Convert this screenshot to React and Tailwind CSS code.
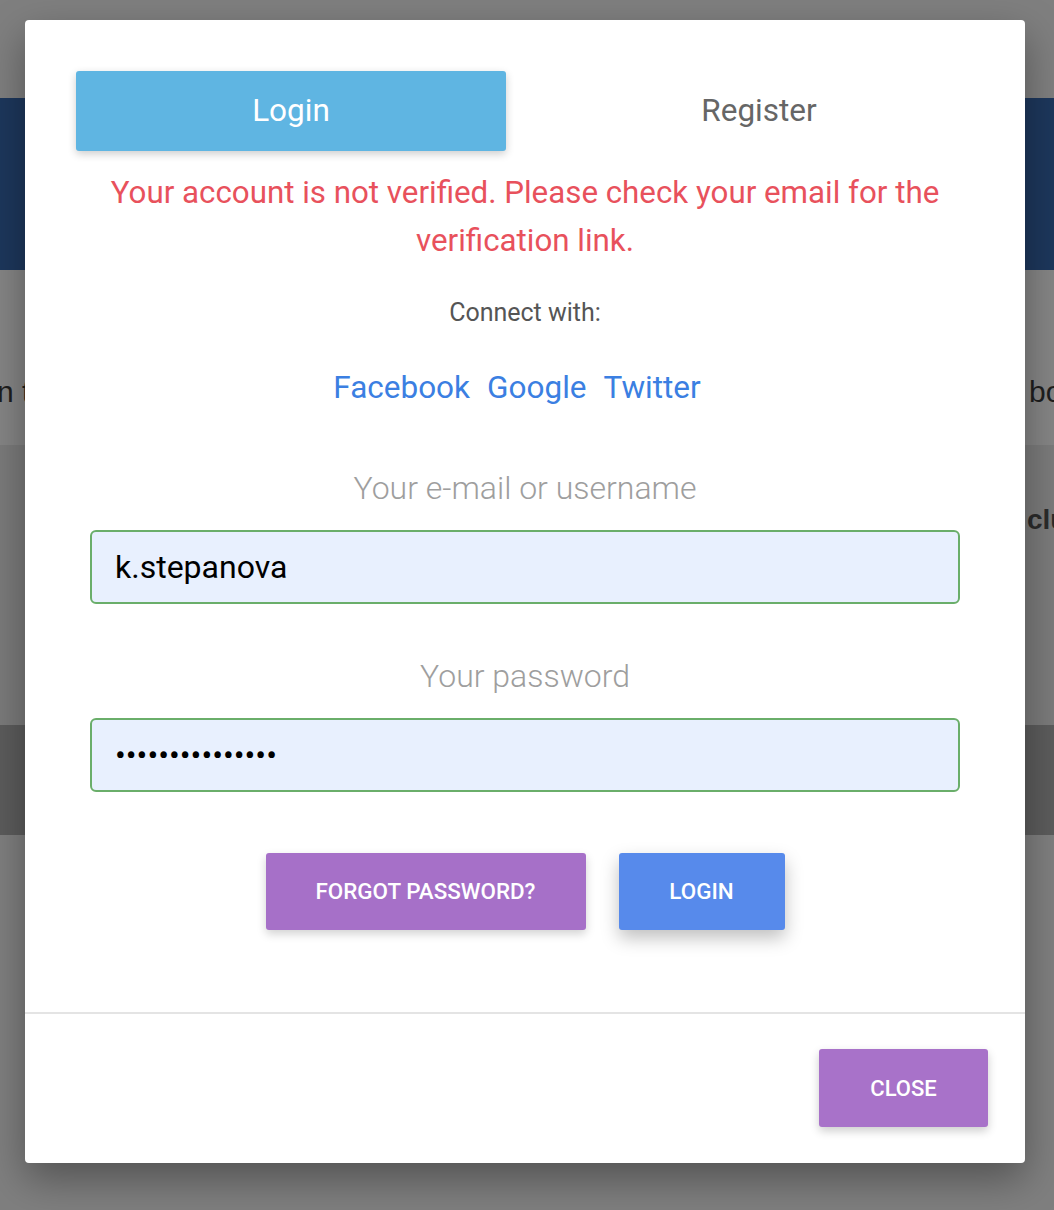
import React, { useState } from 'react'

/**
 * Login modal shown over a dimmed landing page.
 */
function Backdrop() {
    return (
        <div className="w-full min-h-[1210px] bg-[#7f7f7f] font-['Liberation_Sans',sans-serif]">
            <div className="h-[98px] bg-[#7f7f7f]" />
            <div className="h-[172px] bg-[#1d375c]" />
            <div className="h-[175px] bg-[#858585] flex items-start pt-[104px] overflow-hidden whitespace-nowrap text-[30px] leading-[36px] text-[#1e1e1e]">
                <span className="-ml-[3px]">n t</span>
                <span className="ml-auto w-[27px] overflow-hidden pl-[2px]">book</span>
            </div>
            <div className="h-[280px] bg-[#7b7b7b] flex pt-[54px] overflow-hidden whitespace-nowrap">
                <span className="ml-auto w-[27px] overflow-hidden text-[28px] font-bold text-[#2b2b2b]">club</span>
            </div>
            <div className="h-[110px] bg-[#5c5c5c]" />
        </div>
    )
}

function LoginModal() {
    const [tab, setTab] = useState('login')
    const [user, setUser] = useState('k.stepanova')
    const [pass, setPass] = useState('•••••••••••••••')

    return (
        <div className="absolute left-[25px] top-[20px] w-[1000px] bg-white rounded-[4px] shadow-[0_16px_40px_rgba(0,0,0,0.35)] font-['Roboto',sans-serif]">
            <div className="pt-[51px] pb-[82px] flex flex-col items-center">
                <div className="flex gap-[38px] w-[898px]">
                    <button
                        onClick={() => setTab('login')}
                        className="flex-1 h-[80px] rounded-[3px] bg-[#5fb5e2] text-white text-[31.5px] shadow-[0_3px_8px_rgba(0,0,0,0.2)]"
                    >
                        Login
                    </button>
                    <button onClick={() => setTab('register')} className="flex-1 h-[80px] text-[#666666] text-[31.5px]">
                        Register
                    </button>
                </div>

                <p className="mt-[18px] w-[870px] text-center text-[31.3px] leading-[48px] text-[#e8515c]">
                    Your account is not verified. Please check your email for the verification link.
                </p>

                <p className="mt-[32px] text-[25px] leading-[32px] text-[#555555]">Connect with:</p>

                <div className="mt-[39px] pr-[16px] flex gap-[17px] text-[31.5px] leading-[40px] text-[#3b7fe2]">
                    <a href="#">Facebook</a>
                    <a href="#">Google</a>
                    <a href="#">Twitter</a>
                </div>

                <label className="mt-[60px] text-[32px] leading-[40px] font-light text-[#9e9e9e]">Your e-mail or username</label>
                <input
                    value={user}
                    onChange={e => setUser(e.target.value)}
                    className="mt-[22px] w-[870px] h-[74px] rounded-[6px] border-2 border-[#6aae6a] bg-[#e8f0fe] pl-[23px] text-[32px] text-black outline-none"
                />

                <label className="mt-[52px] text-[32px] leading-[40px] font-light text-[#9e9e9e]">Your password</label>
                <input
                    type="password"
                    value={pass}
                    onChange={e => setPass(e.target.value)}
                    className="mt-[22px] w-[870px] h-[74px] rounded-[6px] border-2 border-[#6aae6a] bg-[#e8f0fe] pl-[23px] text-[32px] text-black outline-none"
                />

                <div className="mt-[61px] flex gap-[33px]">
                    <button className="w-[320px] h-[77px] rounded-[3px] bg-[#a670c8] text-white text-[22.4px] font-medium uppercase shadow-[0_4px_10px_rgba(0,0,0,0.18)]">
                        Forgot password?
                    </button>
                    <button className="w-[166px] h-[77px] rounded-[3px] bg-[#578aeb] text-white text-[22.4px] font-medium uppercase shadow-[0_8px_18px_rgba(0,0,0,0.25)]">
                        Login
                    </button>
                </div>
            </div>

            <div className="border-t-2 border-[#e4e4e4] flex justify-end pt-[35px] pr-[37px] pb-[36px]">
                <button className="w-[169px] h-[78px] rounded-[3px] bg-[#a872c9] text-white text-[22px] font-medium uppercase shadow-[0_4px_10px_rgba(0,0,0,0.2)]">
                    Close
                </button>
            </div>
        </div>
    )
}

export default function App() {
    return (
        <div className="relative w-full h-[1210px] overflow-hidden">
            <Backdrop />
            <LoginModal />
        </div>
    )
}
